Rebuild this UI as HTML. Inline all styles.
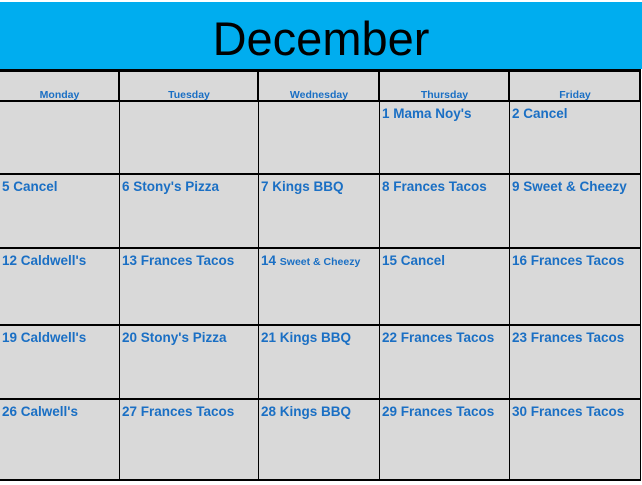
<!DOCTYPE html><html><head><style>
body{margin:0;width:642px;height:485px;background:#fff;position:relative;overflow:hidden;font-family:"Liberation Sans",Arial,sans-serif}
div{position:absolute;box-sizing:border-box}
.t{color:#1a6fc4;font-weight:bold;font-size:13.5px;white-space:nowrap;line-height:16px}
.h{color:#1a6fc4;font-weight:bold;font-size:10.5px;text-align:center;top:88px;line-height:14px}
.v{background:#000;width:1px;top:100px;height:381px}
.vh{background:#000;width:2px;top:69px;height:32px}
.r{background:#000;height:2px;left:0;width:641px}
</style></head><body>
<div style="left:0;top:2px;width:642px;height:67px;background:#00adef"></div>
<div style="left:0;top:11px;width:642px;text-align:center;font-size:47px;line-height:56px;color:#000">December</div>
<div style="left:0;top:69px;width:641px;height:412px;background:#d9d9d9"></div>
<div class="r" style="top:69px;height:3px"></div>
<div class="r" style="top:100px"></div>
<div class="r" style="top:173px"></div>
<div class="r" style="top:247px"></div>
<div class="r" style="top:324px"></div>
<div class="r" style="top:398px"></div>
<div class="r" style="top:479px"></div>
<div class="vh" style="left:118px"></div>
<div class="vh" style="left:257px"></div>
<div class="vh" style="left:378px"></div>
<div class="vh" style="left:508px"></div>
<div class="vh" style="left:639px"></div>
<div class="v" style="left:119px"></div>
<div class="v" style="left:258px"></div>
<div class="v" style="left:379px"></div>
<div class="v" style="left:509px"></div>
<div class="v" style="left:640px"></div>
<div class="h" style="left:0;width:119px">Monday</div>
<div class="h" style="left:120px;width:138px">Tuesday</div>
<div class="h" style="left:259px;width:120px">Wednesday</div>
<div class="h" style="left:380px;width:129px">Thursday</div>
<div class="h" style="left:510px;width:130px">Friday</div>
<div class="t" style="left:382px;top:106px">1 Mama Noy's</div>
<div class="t" style="left:512px;top:106px">2 Cancel</div>
<div class="t" style="left:2px;top:179px">5 Cancel</div>
<div class="t" style="left:122px;top:179px">6 Stony's Pizza</div>
<div class="t" style="left:261px;top:179px">7 Kings BBQ</div>
<div class="t" style="left:382px;top:179px">8 Frances Tacos</div>
<div class="t" style="left:512px;top:179px">9 Sweet &amp; Cheezy</div>
<div class="t" style="left:2px;top:253px">12 Caldwell's</div>
<div class="t" style="left:122px;top:253px">13 Frances Tacos</div>
<div class="t" style="left:261px;top:253px">14 <span style="font-size:10.5px">Sweet &amp; Cheezy</span></div>
<div class="t" style="left:382px;top:253px">15 Cancel</div>
<div class="t" style="left:512px;top:253px">16 Frances Tacos</div>
<div class="t" style="left:2px;top:330px">19 Caldwell's</div>
<div class="t" style="left:122px;top:330px">20 Stony's Pizza</div>
<div class="t" style="left:261px;top:330px">21 Kings BBQ</div>
<div class="t" style="left:382px;top:330px">22 Frances Tacos</div>
<div class="t" style="left:512px;top:330px">23 Frances Tacos</div>
<div class="t" style="left:2px;top:404px">26 Calwell's</div>
<div class="t" style="left:122px;top:404px">27 Frances Tacos</div>
<div class="t" style="left:261px;top:404px">28 Kings BBQ</div>
<div class="t" style="left:382px;top:404px">29 Frances Tacos</div>
<div class="t" style="left:512px;top:404px">30 Frances Tacos</div>
</body></html>
